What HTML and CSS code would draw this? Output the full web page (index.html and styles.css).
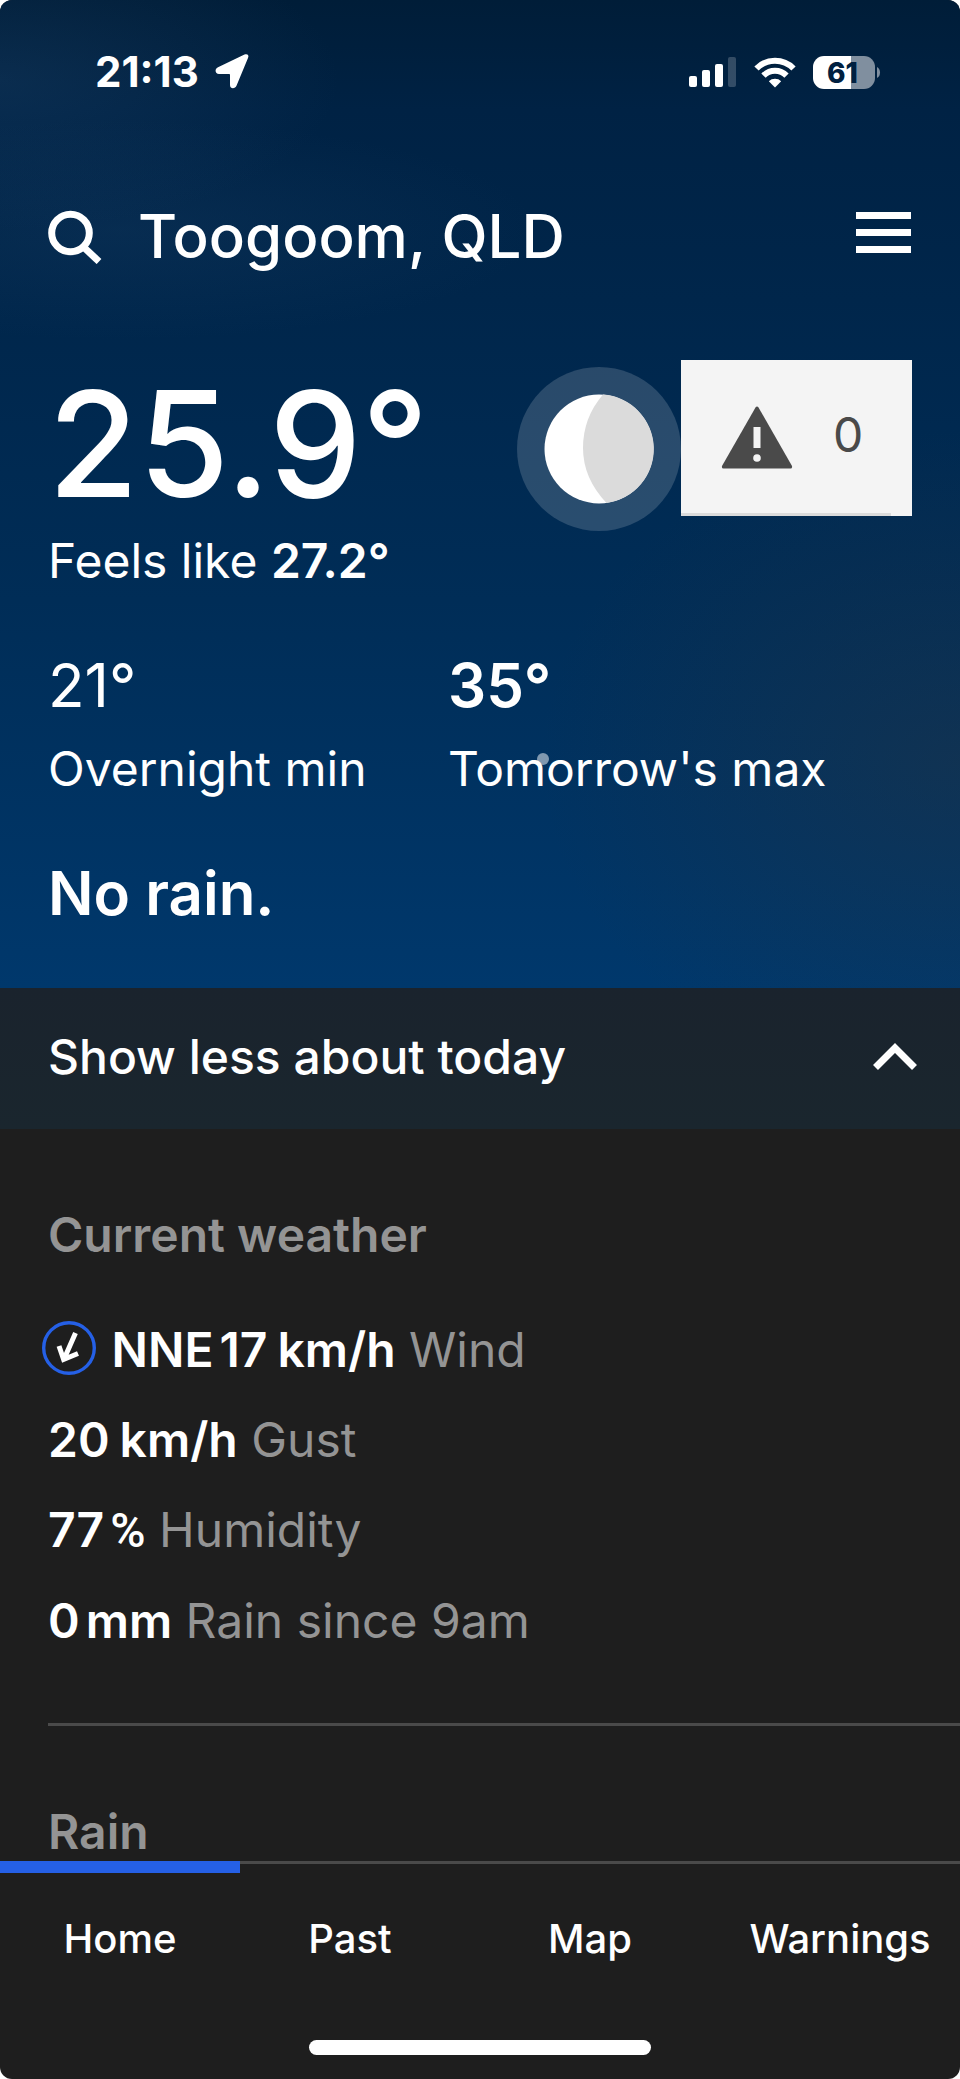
FILE: index.html
```html
<!DOCTYPE html>
<html lang="en">
<head>
  <meta charset="UTF-8">
  <meta name="viewport" content="width=device-width, initial-scale=1">
  <title>Toogoom, QLD</title>
  <link rel="stylesheet" href="styles.css">
</head>
<body>
  <div class="screen">
    <header class="hero">
      <div class="status">
        <span class="time">21:13</span>
        <svg class="location" width="36" height="36" viewBox="0 0 36 36" fill="#fff"><path d="M30.500 .6C33.400-.7 35.300 1.200 34 4.100L22.600 31.500C21 35.500 16 35 16 31V20.800Q16 20 15.200 20H5C1 20 .3 15.100 4 13.300Z"/></svg>
        <svg class="signal" width="48" height="31" viewBox="0 0 48 31" fill="#fff">
          <rect x="0" y="19" width="8" height="11" rx="2"/>
          <rect x="13" y="13" width="8" height="17" rx="2"/>
          <rect x="26" y="7" width="8" height="23" rx="2"/>
          <rect x="39" y="0" width="8" height="30" rx="2" opacity=".2"/>
        </svg>
        <svg class="wifi" width="42" height="31" viewBox="0 0 42 31" fill="none" stroke="#fff" stroke-width="6">
          <path d="M2.500 11.500A26 26 0 0 1 39.500 11.500"/>
          <path d="M9.500 18.700A16 16 0 0 1 32.500 18.700"/>
          <path d="M21 30.500L14.800 24.300A9 9 0 0 1 27.200 24.300Z" fill="#fff" stroke="none"/>
        </svg>
        <svg class="battery" width="68" height="33" viewBox="0 0 68 33">
          <path d="M38 0H51A11 11 0 0 1 62 11V22A11 11 0 0 1 51 33H38Z" fill="#808f9f"/>
          <path d="M38 0H11A11 11 0 0 0 0 11V22A11 11 0 0 0 11 33H38Z" fill="#fff"/>
          <path d="M64 11Q67 12.500 67 16.500T64 22Z" fill="#808f9f"/>
          <text x="29.500" y="26.500" text-anchor="middle" class="battery-text">61</text>
        </svg>
      </div>

      <div class="topbar">
        <button class="icon-btn" aria-label="Search">
          <svg width="54" height="56" viewBox="0 0 54 56" fill="none" stroke="#fff" stroke-width="7"><circle cx="22.500" cy="25" r="18.800"/><path d="M35.500 39L51 53.500"/></svg>
        </button>
        <h1 class="place">Toogoom, QLD</h1>
        <button class="icon-btn" aria-label="Menu">
          <svg width="56" height="54" viewBox="0 0 56 54" fill="#fff"><path d="M0 3h55v7H0zM0 20h55v7H0zM0 37h55v7H0z"/></svg>
        </button>
      </div>

      <div class="now">
        <div class="temp">25.9°</div>
        <svg class="moon" width="164" height="164" viewBox="0 0 164 164">
          <circle cx="82" cy="82" r="82" fill="#fff" opacity=".16"/>
          <circle cx="82" cy="82" r="54.500" fill="#fff"/>
          <path d="M86 27.600A54.500 54.500 0 0 1 89.500 136Q66 111 66 81T86 27.600Z" fill="#dbdbdb"/>
        </svg>
        <a class="alert" href="#warnings" aria-label="Warnings">
          <svg width="72" height="64" viewBox="0 0 72 64"><path d="M34.500 1.500Q36 -.5 37.500 1.500L71 60Q71.500 62.500 69.500 62.500H2.500Q.5 62.500 1 60Z" fill="#4a4a4a"/><path d="M32.500 21h7v21h-7z" fill="#f4f4f4"/><circle cx="36" cy="52" r="3.800" fill="#f4f4f4"/></svg>
          <span class="count">0</span>
        </a>
      </div>
      <p class="feels">Feels like <b>27.2°</b></p>

      <dl class="range">
        <div>
          <dd>21°</dd>
          <dt>Overnight min</dt>
        </div>
        <div>
          <dd class="max">35°</dd>
          <dt class="star">Tomorrow's max</dt>
        </div>
      </dl>
      <p class="summary">No rain.</p>
    </header>

    <button class="toggle" aria-expanded="true">
      <span>Show less about today</span>
      <svg width="44" height="28" viewBox="0 0 44 28" fill="none" stroke="#fff" stroke-width="7"><path d="M2.500 24.500L22 5L41.500 24.500"/></svg>
    </button>

    <main class="details">
      <section class="panel">
        <h2>Current weather</h2>
        <ul class="readings">
          <li>
            <svg class="wind" width="54" height="54" viewBox="0 0 54 54" fill="none">
              <circle cx="27" cy="27" r="25.300" stroke="#2560e6" stroke-width="3.400"/>
              <path d="M33.500 12L22.500 37M17 25L21.600 38.500L36 32.500" stroke="#fff" stroke-width="5"/>
            </svg>
            <b>NNE<i class="hair"></i>17<i class="thin"></i>km/h</b> Wind
          </li>
          <li><b>20<i class="thin"></i>km/h</b> Gust</li>
          <li><b>77<i class="hair"></i><span class="percent">%</span></b> Humidity</li>
          <li><b>0<i class="hair"></i>mm</b> Rain since 9am</li>
        </ul>
      </section>
      <section class="panel">
        <h2>Rain</h2>
      </section>
    </main>

    <nav class="tabs">
      <div class="tab-list">
        <a class="active" href="#home">Home</a>
        <a href="#past">Past</a>
        <a href="#map">Map</a>
        <a href="#warnings">Warnings</a>
      </div>
      <div class="home-indicator"></div>
    </nav>
  </div>
</body>
</html>
```
FILE: styles.css
```css
* { box-sizing: border-box; margin: 0; padding: 0; }
html { background: #fff; }
body { font-family: Inter, "Liberation Sans", sans-serif; font-size: 48px; line-height: 64px; font-weight: 400; color: #fff; }
button { background: none; border: 0; color: inherit; font: inherit; cursor: pointer; }
a { color: inherit; text-decoration: none; }
b { font-weight: 600; }
svg { display: block; flex: none; }

.screen { display: flex; flex-direction: column; min-height: 100vh; background: #1e1e1e; border-radius: 12px; overflow: hidden; }

/* night sky header */
.hero {
  padding: 48px 48px 59px;
  background:
    radial-gradient(ellipse 340px 150px at 0 80px, rgba(40, 80, 120, 0.25), transparent),
    radial-gradient(ellipse 420px 110px at 120px 230px, rgba(40, 80, 120, 0.18), transparent),
    radial-gradient(ellipse 420px 330px at 100% 760px, rgba(40, 52, 64, 0.4), transparent),
    linear-gradient(#001d38, #002244 110px, #00264b 300px, #002d57 600px, #00386c);
}

.status { display: flex; align-items: center; height: 48px; padding: 0 31px 0 47px; }
.time { font-size: 42px; line-height: 48px; font-weight: 700; }
.location { margin-left: 15px; }
.signal { margin-left: auto; }
.wifi { margin-left: 17px; }
.battery { margin-left: 17px; }
.battery-text { font-size: 28px; font-weight: 800; fill: #002040; }

.topbar { display: flex; align-items: center; gap: 36px; padding: 104px 0 88px; }
.icon-btn { display: block; line-height: 0; }
.place { flex: 1; font-size: 60px; line-height: 72px; font-weight: 500; }

.now { display: flex; align-items: flex-start; }
.temp { flex: 1; font-size: 147px; line-height: 168px; font-weight: 500; }
.moon { margin-top: 7px; }
.alert {
  display: flex; align-items: center; gap: 40px; width: 231px; height: 156px; padding: 0 40px; color: #4a4a4a;
  background: linear-gradient(#dbdbdb, #dbdbdb) left bottom / 210px 3px no-repeat #f4f4f4;
}
.count { padding-bottom: 6px; }
.feels { line-height: 60px; }

.range { display: grid; grid-template-columns: 400px 1fr; margin: 58px 0 56px; }
.range dd { margin-bottom: 16px; font-size: 60px; line-height: 72px; }
.range .max { font-weight: 600; }
.star { position: relative; }
.star::after { content: ""; position: absolute; left: 89px; top: 16px; width: 12px; height: 12px; border-radius: 50%; background: #fff; opacity: 0.5; }
.summary { font-size: 60px; line-height: 72px; font-weight: 600; }

.toggle { display: flex; justify-content: space-between; align-items: center; padding: 37px 43px 40px 48px; font-weight: 500; background: linear-gradient(#1a232d, #1a262e); }

.details { padding-left: 48px; color: #949494; }
.panel { padding-top: 78px; }
.panel + .panel { border-top: 3px solid #4a4a4a; }
.panel h2 { font-size: 48px; line-height: 56px; font-weight: 600; }
.readings { padding: 42px 0 57px; list-style: none; line-height: 90px; }
.readings b { color: #fff; }
.thin { display: inline-block; width: 10px; }
.hair { display: inline-block; width: 6px; }
.percent { font-family: Roboto, sans-serif; font-weight: 500; }
.wind { display: inline-block; vertical-align: -8px; margin: 0 2px 0 -6px; }

.tabs { margin-top: auto; padding-bottom: 24px; border-top: 3px solid #4a4a4a; font-size: 40px; line-height: 48px; font-weight: 500; text-align: center; }
.tab-list { display: grid; grid-template-columns: 24fr 22fr 26fr 24fr; }
.tab-list a { position: relative; padding: 51px 0 77px; }
.active::before { content: ""; position: absolute; left: 0; right: 0; top: -3px; height: 12px; background: #2560e6; }
.home-indicator { width: 342px; height: 15px; margin: 0 auto; border-radius: 8px; background: #fff; }
```
